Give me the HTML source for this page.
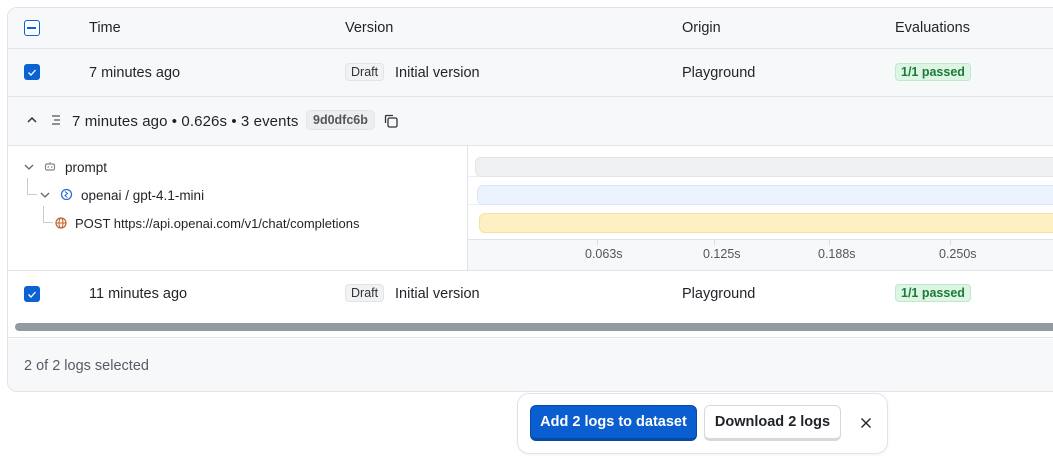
<!DOCTYPE html>
<html><head><style>
*{margin:0;padding:0;box-sizing:border-box}
body{width:1053px;height:461px;background:#fff;font-family:"Liberation Sans",sans-serif;color:#1f2328;position:relative;overflow:hidden;font-size:14.5px}
.a{position:absolute}
.box{left:7px;top:7px;width:1060px;height:385px;border:1px solid #e1e3e6;border-radius:10px;overflow:hidden;background:#fff}
.row{position:absolute;left:0;width:100%;border-bottom:1px solid #e1e3e6}
.t{position:absolute;white-space:nowrap}
.cb{position:absolute;width:16px;height:16px;border-radius:3px;background:#0b63d1}
.draft{position:absolute;background:#f1f2f4;border:1px solid #e1e3e6;border-radius:4px;font-size:12.5px;padding:1px 5px;color:#333}
.pass{position:absolute;background:#dcf6e3;border:1px solid #bfe9cb;border-radius:4px;font-size:12.5px;font-weight:bold;color:#1e7a3a;padding:1px 5px}
.tick{position:absolute;font-size:12.5px;color:#555}
</style></head><body>
<div class="a box">
  <div class="row" style="top:0;height:41px;background:#f7f8fa">
    <div class="cb" style="left:16px;top:12px;background:#fff;border:1.5px solid #0b63d1"><div style="position:absolute;left:2px;top:6px;width:9px;height:1.5px;background:#0b63d1"></div></div>
    <div class="t" style="left:81px;top:12px">Time</div>
    <div class="t" style="left:337px;top:12px">Version</div>
    <div class="t" style="left:674px;top:12px">Origin</div>
    <div class="t" style="left:887px;top:12px">Evaluations</div>
  </div>
  <div class="row" style="top:41px;height:48px;background:#f7f8fa">
    <div class="cb" style="left:16px;top:15px"><svg width="16" height="16"><path d="M4.5 8.5l2.5 2.5 4.5-5" stroke="#fff" stroke-width="1.3" fill="none"/></svg></div>
    <div class="t" style="left:81px;top:16px">7 minutes ago</div>
    <div class="draft" style="left:337px;top:14px">Draft</div>
    <div class="t" style="left:387px;top:16px">Initial version</div>
    <div class="t" style="left:674px;top:16px">Playground</div>
    <div class="pass" style="left:887px;top:14px">1/1 passed</div>
  </div>
  <div class="row" style="top:89px;height:49px;background:#f7f8fa">
    <svg class="a" style="left:18px;top:18px" width="12" height="10"><path d="M2 7l4-4 4 4" stroke="#333" stroke-width="1.5" fill="none"/></svg>
    <svg class="a" style="left:43px;top:17px" width="12" height="12"><path d="M1 2h8M3 6h6M1 10h8" stroke="#555" stroke-width="1.3"/></svg>
    <div class="t" style="left:64px;top:16px;font-size:15px;letter-spacing:0.1px">7 minutes ago • 0.626s • 3 events</div>
    <div class="a" style="left:298px;top:13px;background:#eceef1;border:1px solid #e1e3e6;border-radius:5px;font-size:12.5px;font-weight:bold;color:#555;padding:2px 6px">9d0dfc6b</div>
    <svg class="a" style="left:375px;top:16px" width="16" height="16"><rect x="5" y="5" width="9" height="9" rx="1.5" stroke="#333" stroke-width="1.3" fill="none"/><path d="M2.5 10V3.5a1 1 0 0 1 1-1H10" stroke="#333" stroke-width="1.3" fill="none"/></svg>
  </div>
  <div class="row" style="top:138px;height:125px;background:#fff">
    <div class="a" style="left:459px;top:0;width:1px;height:124px;background:#e1e3e6"></div>
    <div class="a" style="left:460px;top:0;width:600px;height:124px;background:#f7f8fa"></div>
    <div class="a" style="left:460px;top:0;width:600px;height:93px;background:#fff"></div>
    <div class="a" style="left:460px;top:30px;width:600px;height:1px;background:#eceef0"></div>
    <div class="a" style="left:460px;top:58px;width:600px;height:1px;background:#eceef0"></div>
    <div class="a" style="left:460px;top:93px;width:600px;height:1px;background:#e1e3e6"></div>
    <div class="a" style="left:467px;top:11px;width:600px;height:20px;background:#eff0f2;border:1px solid #e4e5e8;border-radius:6px"></div>
    <div class="a" style="left:469px;top:39px;width:600px;height:20px;background:#eaf3fe;border:1px solid #d8e7fb;border-radius:6px"></div>
    <div class="a" style="left:471px;top:67px;width:600px;height:20px;background:#fef0c2;border:1px solid #f5e1a0;border-radius:6px"></div>
    <div class="a" style="left:589px;top:94px;width:1px;height:5px;background:#ddd"></div>
    <div class="a" style="left:706px;top:94px;width:1px;height:5px;background:#ddd"></div>
    <div class="a" style="left:821px;top:94px;width:1px;height:5px;background:#ddd"></div>
    <div class="a" style="left:942px;top:94px;width:1px;height:5px;background:#ddd"></div>
    <div class="tick" style="left:577px;top:101px">0.063s</div>
    <div class="tick" style="left:695px;top:101px">0.125s</div>
    <div class="tick" style="left:810px;top:101px">0.188s</div>
    <div class="tick" style="left:931px;top:101px">0.250s</div>
    <svg class="a" style="left:15px;top:16px" width="12" height="10"><path d="M2 3l4 4 4-4" stroke="#666" stroke-width="1.3" fill="none"/></svg>
    <svg class="a" style="left:36px;top:14px" width="12" height="12"><rect x="1.5" y="4" width="9" height="6" rx="1.5" stroke="#888" stroke-width="1.2" fill="none"/><path d="M6 4V2" stroke="#888"/><circle cx="4.3" cy="7" r=".8" fill="#888"/><circle cx="7.7" cy="7" r=".8" fill="#888"/></svg>
    <div class="t" style="left:57px;top:14px;font-size:13.5px">prompt</div>
    <div class="a" style="left:19px;top:32px;width:10px;height:17px;border-left:1px solid #ccc;border-bottom:1px solid #ccc"></div>
    <svg class="a" style="left:31px;top:44px" width="12" height="10"><path d="M2 3l4 4 4-4" stroke="#666" stroke-width="1.3" fill="none"/></svg>
    <svg class="a" style="left:52px;top:42px" width="13" height="13"><circle cx="6.5" cy="6.5" r="5" stroke="#2b6fd6" stroke-width="1.3" fill="none"/><path d="M5 3.5l2.5 2-2.5 2 2.5 2" stroke="#2b6fd6" stroke-width="1.1" fill="none"/></svg>
    <div class="t" style="left:73px;top:42px;font-size:13.5px">openai / gpt-4.1-mini</div>
    <div class="a" style="left:35px;top:60px;width:10px;height:17px;border-left:1px solid #ccc;border-bottom:1px solid #ccc"></div>
    <svg class="a" style="left:47px;top:71px" width="12" height="12"><circle cx="6" cy="6" r="5" stroke="#c0622b" stroke-width="1.2" fill="none"/><ellipse cx="6" cy="6" rx="2" ry="5" stroke="#c0622b" stroke-width="1" fill="none"/><path d="M1 6h10" stroke="#c0622b"/></svg>
    <div class="t" style="left:67px;top:70px;font-size:13px">POST https://api.openai.com/v1/chat/completions</div>
  </div>
  <div class="row" style="top:263px;height:67px;background:#fff;border-bottom:1px solid #e1e3e6">
    <div class="cb" style="left:16px;top:15px"><svg width="16" height="16"><path d="M4.5 8.5l2.5 2.5 4.5-5" stroke="#fff" stroke-width="1.3" fill="none"/></svg></div>
    <div class="t" style="left:81px;top:15px">11 minutes ago</div>
    <div class="draft" style="left:337px;top:13px">Draft</div>
    <div class="t" style="left:387px;top:15px">Initial version</div>
    <div class="t" style="left:674px;top:15px">Playground</div>
    <div class="pass" style="left:887px;top:13px">1/1 passed</div>
    <div class="a" style="left:7px;top:52px;width:1060px;height:8px;background:#949aa3;border-radius:4px"></div>
  </div>
  <div class="a" style="left:0;top:331px;width:100%;height:54px;background:#f7f8fa">
    <div class="t" style="left:16px;top:19px;color:#555c66">2 of 2 logs selected</div>
  </div>
</div>
<div class="a" style="left:517px;top:393px;width:371px;height:61px;background:#fff;border:1px solid #e1e3e6;border-radius:12px;box-shadow:0 1px 3px rgba(0,0,0,.05)">
  <div class="a" style="left:12px;top:11px;width:167px;height:36px;background:#0b5ecf;border:1px solid #064aa8;border-bottom-width:3px;border-radius:6px;color:#fff;font-weight:bold;font-size:14.5px;text-align:center;line-height:32px">Add 2 logs to dataset</div>
  <div class="a" style="left:186px;top:11px;width:137px;height:36px;background:#fff;border:1px solid #d6d8dc;border-bottom-width:3px;border-radius:6px;font-weight:bold;font-size:14.5px;text-align:center;line-height:32px">Download 2 logs</div>
  <svg class="a" style="left:342px;top:23px" width="12" height="12"><path d="M1.5 1.5l9 9M10.5 1.5l-9 9" stroke="#222" stroke-width="1.4"/></svg>
</div>
</body></html>
